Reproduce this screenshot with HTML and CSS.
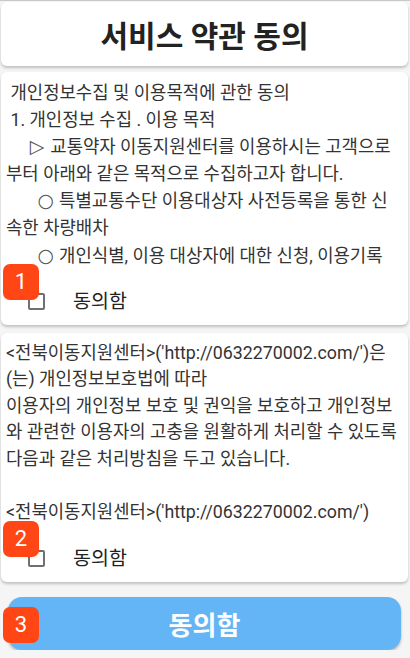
FILE: index.html
```html
<!DOCTYPE html>
<html lang="ko">
<head>
    <meta charset="UTF-8">
    <meta name="viewport" content="width=device-width, initial-scale=1.0">
    <title>서비스 약관 동의</title>
    <link rel="stylesheet" href="styles.css">
</head>
<body>
    <div class="page">
        <div class="header-card">
            <h1>서비스 약관 동의</h1>
        </div>

        <div class="terms-card first">
            <div class="terms-text"> 개인정보수집 및 이용목적에 관한 동의
 1. 개인정보 수집 . 이용 목적
     <span class="sym">▷</span> 교통약자 이동지원센터를 이용하시는 고객으로부터 아래와 같은 목적으로 수집하고자 합니다.
       <span class="sym">○</span> 특별교통수단 이용대상자 사전등록을 통한 신속한 차량배차
       <span class="sym">○</span> 개인식별, 이용 대상자에 대한 신청, 이용기록</div>
            <label class="check-row">
                <span class="checkbox"></span>
                <span class="check-label">동의함</span>
                <span class="badge">1</span>
            </label>
        </div>

        <div class="terms-card second">
            <div class="terms-text">&lt;전북이동지원센터&gt;('http://0632270002.com/')은(는) 개인정보보호법에 따라
이용자의 개인정보 보호 및 권익을 보호하고 개인정보와 관련한 이용자의 고충을 원활하게 처리할 수 있도록 다음과 같은 처리방침을 두고 있습니다.

&lt;전북이동지원센터&gt;('http://0632270002.com/')</div>
            <label class="check-row">
                <span class="checkbox"></span>
                <span class="check-label">동의함</span>
                <span class="badge">2</span>
            </label>
        </div>

        <div class="submit-wrap">
            <button type="button" class="submit-btn">동의함</button>
            <span class="badge">3</span>
        </div>
    </div>
</body>
</html>
```

FILE: styles.css
```css
* { margin: 0; padding: 0; box-sizing: border-box; }
body {
    font-family: Roboto, "Noto Sans CJK KR", sans-serif;
    background: #f5f5f5;
    color: #333;
    border-top: 1px solid #c8c8c8;
}
.page {
    width: 410px;
    padding: 1px 2px 0 1px;
}
.header-card {
    background: #fff;
    border-radius: 6px;
    height: 64px;
    display: flex;
    align-items: center;
    justify-content: center;
    box-shadow: 0 2px 3px rgba(0, 0, 0, 0.22);
}
h1 {
    font-size: 30px;
    font-weight: bold;
    color: #222;
}
.terms-card {
    background: #fff;
    border-radius: 6px;
    padding: 7px 5px 3px 5px;
    box-shadow: 0 2px 3px rgba(0, 0, 0, 0.22);
}
.terms-card.first {
    margin-top: 6px;
}
.terms-card.second {
    margin-top: 8px;
}
.terms-text {
    white-space: pre-wrap;
    font-size: 17.8px;
    line-height: 26.6px;
    color: #333;
}
.first .terms-text {
    line-height: 27.1px;
}
.sym {
    display: inline-block;
    width: 17.8px;
    line-height: 1;
    text-align: center;
    font-family: "DejaVu Sans", sans-serif;
    font-size: 19px;
    color: #555;
}
.check-row {
    position: relative;
    display: flex;
    align-items: center;
    height: 48px;
    margin-top: 5px;
    padding-left: 22px;
}
.checkbox {
    width: 17px;
    height: 17px;
    border: 2px solid #707070;
    border-radius: 2px;
    margin-top: 8px;
    margin-right: 28px;
}
.check-label {
    font-size: 19.5px;
    color: #222;
    margin-top: 4px;
}
.badge {
    position: absolute;
    width: 36px;
    height: 36px;
    border-radius: 7px;
    background: #ff4614;
    color: #fff;
    font-family: Roboto, sans-serif;
    font-size: 22px;
    display: flex;
    align-items: center;
    justify-content: center;
}
.check-row .badge {
    left: -3px;
    top: -10px;
}
.submit-wrap {
    position: relative;
    margin: 15px 7px 0 7px;
}
.submit-btn {
    width: 100%;
    height: 53px;
    border: none;
    border-radius: 14px;
    background: #64b5f6;
    color: #fff;
    font-family: Roboto, "Noto Sans CJK KR", sans-serif;
    font-size: 26px;
    font-weight: bold;
    box-shadow: 0 2px 3px rgba(0, 0, 0, 0.25);
    cursor: pointer;
}
.submit-wrap .badge {
    left: -5px;
    top: 10px;
}
```
